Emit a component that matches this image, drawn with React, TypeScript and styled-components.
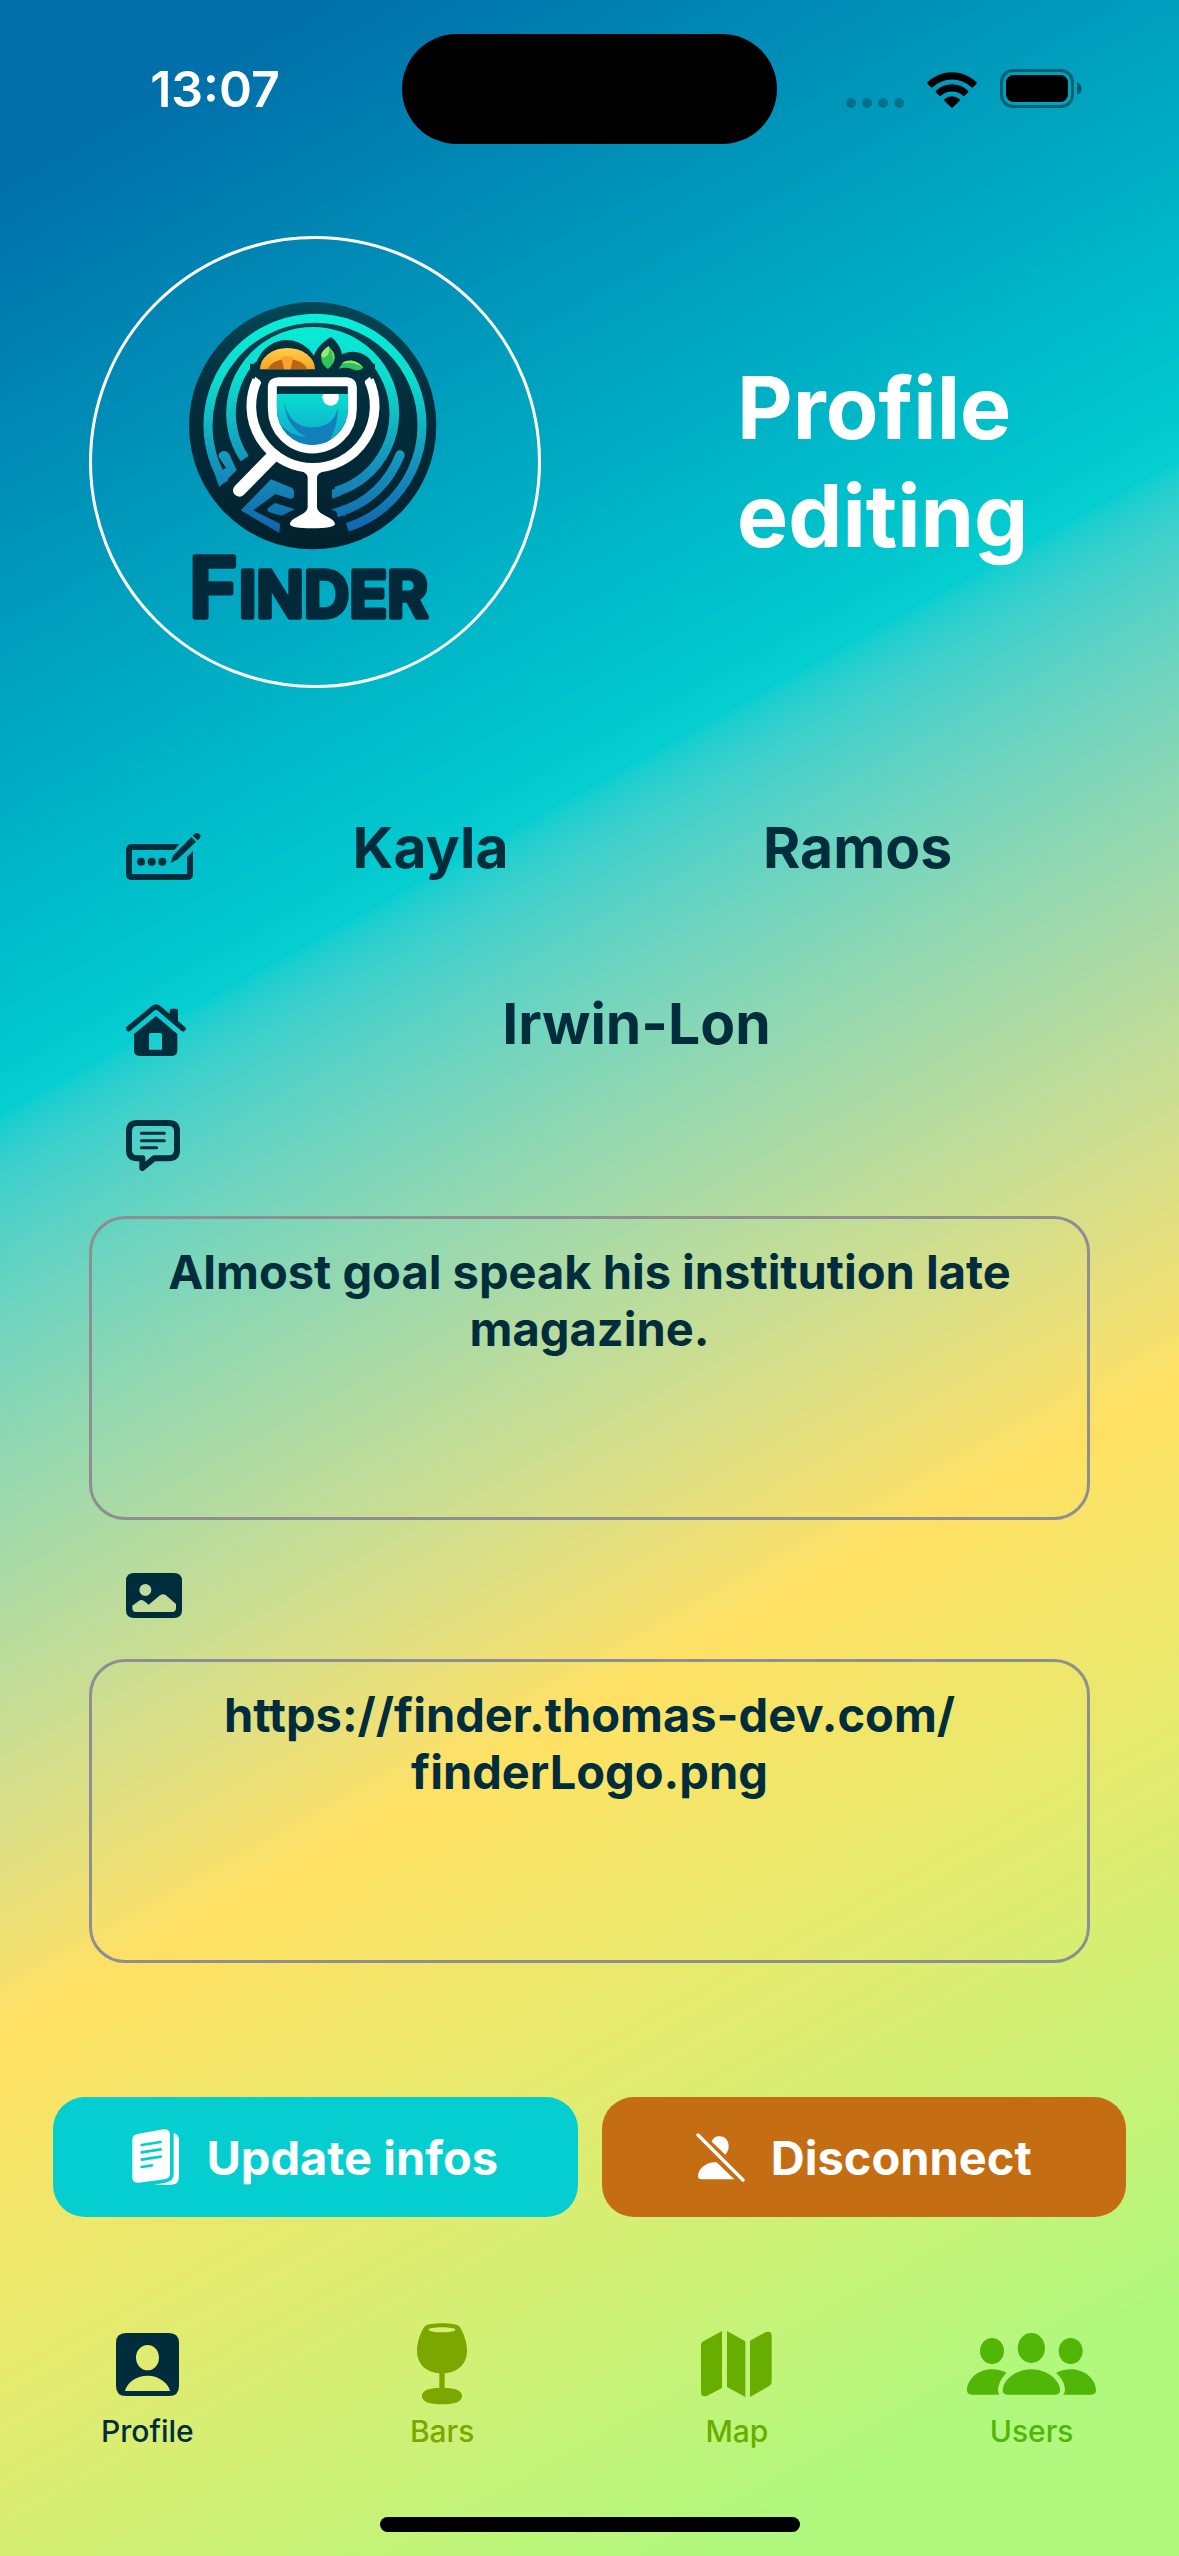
import React, { useState } from "react";
import styled, { createGlobalStyle } from "styled-components";

const ink = "#002d3b";

const GlobalStyle = createGlobalStyle`
  *, *::before, *::after { box-sizing: border-box; }
  body { margin: 0; }
  body, input, textarea, button {
    font-family: Inter, "Liberation Sans", sans-serif;
  }
`;

const Screen = styled.div`
  min-height: 100vh;
  display: flex;
  flex-direction: column;
  color: ${ink};
  background: linear-gradient(
    151deg in oklab,
    #016fa9 5.6%,
    #05ced1 34.7%,
    #ffe164 63.4%,
    #b0f87e 92.2%
  );
`;

const StatusBar = styled.div`
  height: 177px;
  padding: 0 28px;
  display: grid;
  grid-template-columns: 1fr 375px 1fr;
  align-items: center;
  justify-items: center;
`;

const Clock = styled.time`
  color: #fff;
  font-size: 50px;
  font-weight: 600;
  line-height: 60px;
`;

const Island = styled.div`
  width: 100%;
  height: 110px;
  border-radius: 55px;
  background: #000;
`;

const StatusIcons = styled.div`
  display: flex;
  align-items: flex-end;
  gap: 23px;
  svg { display: block; }
`;

const Header = styled.header`
  display: flex;
  align-items: center;
  margin-top: 59px;
  padding: 0 89px;
`;

const Avatar = styled.div`
  flex: none;
  width: 452px;
  height: 452px;
  display: flex;
  align-items: center;
  justify-content: center;
  border: 3px solid #fff;
  border-radius: 50%;
`;

const Title = styled.h1`
  flex: 1;
  margin: 0;
  padding-left: 196px;
  color: #fff;
  font-size: 86px;
  font-weight: 700;
  line-height: 108px;
`;

const Form = styled.form`
  display: flex;
  flex-direction: column;
  padding: 126px 89px 0;
`;

const Row = styled.div`
  display: flex;
  align-items: flex-end;
  gap: 20px;
  padding: 0 23px 0 37px;
  & + & { margin-top: 110px; }
`;

const IconLabel = styled.label`
  flex: none;
  display: block;
  svg { display: block; }
`;

const AreaLabel = styled(IconLabel)<{ $top: number; $bottom: number }>`
  margin-top: ${(p) => p.$top}px;
  margin-bottom: ${(p) => p.$bottom}px;
  padding-left: 37px;
`;

const Fields = styled.div`
  flex: 1;
  min-width: 0;
  display: flex;
  gap: 8px;
`;

const TextField = styled.input`
  flex: 1;
  width: 0;
  min-width: 0;
  height: 66px;
  padding: 0;
  border: 0;
  outline: 0;
  background: transparent;
  color: ${ink};
  font-size: 57px;
  font-weight: 700;
  text-align: center;
`;

const TextArea = styled.textarea`
  display: block;
  width: 100%;
  height: 304px;
  margin: 0;
  padding: 24px 40px;
  border: 3px solid #8e8e93;
  border-radius: 36px;
  outline: 0;
  resize: none;
  overflow: hidden;
  background: transparent;
  color: ${ink};
  font-size: 47px;
  font-weight: 700;
  line-height: 57px;
  text-align: center;
`;

const Actions = styled.div`
  display: flex;
  gap: 24px;
  margin-top: 134px;
  padding: 0 53px;
`;

const ActionButton = styled.button<{ $color: string }>`
  flex: 1;
  height: 120px;
  display: flex;
  align-items: center;
  justify-content: center;
  gap: 26px;
  padding: 0;
  border: 0;
  border-radius: 32px;
  background: ${(p) => p.$color};
  color: #fff;
  font-size: 47px;
  font-weight: 700;
  cursor: pointer;
`;

const TabBar = styled.nav`
  display: flex;
  margin-top: 106px;
`;

const Tab = styled.a<{ $color: string }>`
  flex: 1;
  display: flex;
  flex-direction: column;
  align-items: center;
  gap: 8px;
  color: ${(p) => p.$color};
  font-size: 30px;
  font-weight: 500;
  line-height: 36px;
  text-decoration: none;
`;

const TabIcon = styled.span`
  height: 82px;
  display: flex;
  align-items: center;
`;

const HomeIndicator = styled.div`
  width: 420px;
  height: 15px;
  margin: 68px auto 24px;
  border-radius: 8px;
  background: #000;
`;

const SignalDots = () => (
  <svg width="58" height="10" viewBox="0 0 58 10" opacity="0.25">
    <circle cx="5" cy="5" r="5" />
    <circle cx="21" cy="5" r="5" />
    <circle cx="37" cy="5" r="5" />
    <circle cx="53" cy="5" r="5" />
  </svg>
);

const Wifi = () => (
  <svg width="50" height="37" viewBox="0 0 50 37">
    <path d="M.8 13.2Q-.3 12 .9 10.8A35 35 0 0 1 49.1 10.8Q50.3 12 49.2 13.2L45.6 16.4Q45 16.8 44.3 16.2A28 28 0 0 0 5.7 16.2Q5 16.8 4.4 16.4Z" />
    <path d="M9 21.5Q8 20.4 9.1 19.4A23.5 23.5 0 0 1 40.9 19.4Q42 20.4 41 21.5L37.3 25Q36.7 25.4 36 24.8A16.5 16.5 0 0 0 14 24.8Q13.3 25.4 12.7 25Z" />
    <path d="M17.6 30Q16.5 29 17.6 28A11 11 0 0 1 32.4 28Q33.5 29 32.4 30L26 36.3Q25 37.3 24 36.3Z" />
  </svg>
);

const Battery = () => (
  <svg width="82" height="39" viewBox="0 0 82 39">
    <rect x="1.5" y="1.5" width="71" height="36" rx="11.5" fill="none" stroke="#000" strokeWidth="3" opacity="0.4" />
    <rect x="6" y="6" width="62" height="27" rx="7.5" />
    <path d="M77 13q4.500 2 4.500 6.500T77 26z" opacity="0.45" />
  </svg>
);

const FinderLogo = () => (
  <svg width="290" height="360" viewBox="0 5 870 1080" role="img" aria-label="Finder logo">
    <defs>
      <linearGradient id="ring" gradientUnits="userSpaceOnUse" x1="0" y1="96" x2="0" y2="760">
        <stop offset="0" stopColor="#08efda" />
        <stop offset="0.3" stopColor="#0cdccd" />
        <stop offset="0.65" stopColor="#1599bd" />
        <stop offset="1" stopColor="#1263ac" />
      </linearGradient>
      <linearGradient id="disc" x1="0" y1="0" x2="0" y2="1">
        <stop offset="0" stopColor="#034857" />
        <stop offset="0.35" stopColor="#022f3e" />
        <stop offset="1" stopColor="#02202c" />
      </linearGradient>
      <linearGradient id="drink" x1="0" y1="0" x2="0" y2="1">
        <stop offset="0" stopColor="#08dfd0" />
        <stop offset="1" stopColor="#12a3cb" />
      </linearGradient>
      <linearGradient id="orange" x1="0" y1="0" x2="0" y2="1">
        <stop offset="0" stopColor="#ffcf4d" />
        <stop offset="1" stopColor="#f9a31f" />
      </linearGradient>
      <clipPath id="liquidClip">
        <path d="M320 340H534V385A107 109 0 0 1 320 385Z" />
      </clipPath>
    </defs>
    <circle cx="428" cy="436" r="371" fill="url(#disc)" />
    <path d="M164 607A321 321 0 1 1 532 741" fill="none" stroke="url(#ring)" strokeWidth="27" />
    <path d="M140 600L148 620L200 570L178 522Q168 507 153 514Q142 522 148 532L168 562L136 583Z" fill="url(#ring)" />
    <path d="M248 243A241 241 0 0 1 608 243Z" fill="url(#ring)" />
    <path d="M224 535A245 245 0 1 1 498 634" fill="none" stroke="url(#ring)" strokeWidth="29" />
    <path d="M486 628V655L512 646L512 618Z" fill="url(#ring)" />
    <path d="M690 524C660 600 600 670 500 697" fill="none" stroke="url(#ring)" strokeWidth="28" />
    <circle cx="690" cy="524" r="14" fill="url(#ring)" />
    <path d="M483 686L525 708L530 680Z" fill="url(#ring)" />
    <path d="M303 597L365 622Q372 626 372 634V646Q372 656 360 655L316 641L250 690L330 730L328 758L212 690Z" fill="url(#ring)" />
    <path d="M315 668L374 687L335 706L298 696Q289 690 295 682Z" fill="url(#ring)" />
    <g fill="#02303e">
      <circle cx="350" cy="273" r="94" />
      <path d="M425 260C425 215 455 185 483 170C510 190 522 220 518 262Z" />
      <circle cx="548" cy="284" r="70" />
      <path d="M240 250H615V330H240Z" />
    </g>
    <path d="M270 267A82 64 0 0 1 435 267Z" fill="url(#orange)" />
    <path d="M294 267A60 40 0 0 1 411 267Z" fill="#bd6413" />
    <path d="M333 230L343 267H362L370 230Q352 225 333 230Z" fill="#f7a52a" />
    <path d="M474 266C445 245 448 215 476 197C497 220 500 245 474 266Z" fill="#2ec35c" />
    <path d="M476 197C450 215 448 230 462 232C475 225 482 215 476 197Z" fill="#9be96b" />
    <path d="M480 205C492 225 492 240 485 252C500 235 495 215 480 205Z" fill="#86e060" />
    <path d="M507 265C520 235 560 235 580 262Q568 274 552 268Q530 258 507 265Z" fill="#2ec35c" />
    <path d="M514 250C530 236 560 235 580 262Q550 240 514 250Z" fill="#9be96b" />
    <path d="M208 630L306 530" stroke="#fff" strokeWidth="38" strokeLinecap="round" />
    <path d="M261 300A185 185 0 1 0 597 300" fill="none" stroke="#fff" strokeWidth="29" />
    <path d="M249 306L256 289L272 302L264 320Z" fill="#fff" />
    <path d="M607 306L600 289L584 302L592 320Z" fill="#fff" />
    <path d="M325 304H530Q547 304 547 321V385A120 121 0 0 1 307 385V321Q307 304 325 304Z" fill="#02303e" stroke="#fff" strokeWidth="27" />
    <g clipPath="url(#liquidClip)">
      <rect x="320" y="340" width="214" height="155" fill="url(#drink)" />
      <path d="M342 358C350 420 390 441 428 441C465 441 495 425 503 384C506 430 485 465 470 500H370L330 430Q355 465 410 470Q345 440 342 358Z" fill="#1280bb" />
      <circle cx="482" cy="351" r="25" fill="#fff" />
    </g>
    <path d="M395 572H461Q441 580 441 592V680C441 705 495 710 495 732Q490 744 428 744Q362 744 360 732C360 710 413 705 413 680V592Q413 580 395 572Z" fill="#fff" />
    <g fill="#02293a" stroke="#02293a" strokeWidth="16" strokeLinejoin="round" fontFamily="Inter, sans-serif" fontWeight="600">
      <text x="58" y="1010" fontSize="246">F</text>
      <text x="207" y="1010" fontSize="188">INDER</text>
    </g>
  </svg>
);

const NameIcon = () => (
  <svg width="75" height="47" viewBox="0 0 225 141">
    <path d="M160 33L145 51H18V123H183V72L201 54V122Q201 141 182 141H19Q0 141 0 122V52Q0 33 19 33Z" fill={ink} />
    <circle cx="45" cy="86" r="12" fill={ink} />
    <circle cx="77" cy="86" r="12" fill={ink} />
    <circle cx="109" cy="86" r="12" fill={ink} />
    <path d="M134 90L141 68L196 12L210 26L155 79Z" fill={ink} />
    <path d="M200 8Q211-5 220 3Q229 13 215 22Z" fill={ink} />
  </svg>
);

const HouseIcon = () => (
  <svg width="60" height="52" viewBox="0 0 180 156">
    <path d="M8 74L82 12Q90 6 98 12L171 74" fill="none" stroke={ink} strokeWidth="16" strokeLinecap="round" />
    <path d="M131 36V20Q131 14 137 14H150Q156 14 156 20V58Z" fill={ink} />
    <path fillRule="evenodd" d="M90 36L154 90V139Q154 156 138 156H41Q24 156 24 139V90ZM74 87Q69 87 69 92V137H108V92Q108 87 103 87Z" fill={ink} />
  </svg>
);

const CommentIcon = () => (
  <svg width="54" height="51" viewBox="0 0 162 153">
    <path d="M34 9H128Q153 9 153 34V91Q153 115 128 115H84L49 144V115H34Q9 115 9 91V34Q9 9 34 9Z" fill="none" stroke={ink} strokeWidth="18" strokeLinejoin="round" />
    <path d="M46 40H115M46 62H115M46 83H92" stroke={ink} strokeWidth="9" strokeLinecap="round" />
  </svg>
);

const PhotoIcon = () => (
  <svg width="56" height="45" viewBox="0 0 168 135">
    <path fillRule="evenodd" d="M24 0H144Q168 0 168 24V111Q168 135 144 135H24Q0 135 0 111V24Q0 0 24 0ZM58 33A18 18 0 1 0 58 69A18 18 0 1 0 58 33ZM19 98V106Q19 117 30 117H138Q150 117 150 106V93L120 67Q111 60 102 67L68 95L54 84Q46 78 38 84Z" fill={ink} />
  </svg>
);

const DocumentsIcon = () => (
  <svg width="48" height="56" viewBox="0 0 144 168">
    <path d="M16 15L94 1Q114-1 114 18V133Q114 148 98 151L20 161Q2 162 1 146V33Q1 18 16 15Z" fill="#fff" />
    <path d="M125 12Q141 16 141 34V143Q141 167 117 167H66L100 161Q125 156 125 136Z" fill="#fff" />
    <path d="M29 48L86 39M29 70L86 61M29 92L86 83M29 114L60 109" stroke="#05ced1" strokeWidth="8" strokeLinecap="round" />
  </svg>
);

const PersonOffIcon = () => (
  <svg width="49" height="49" viewBox="0 0 147 147">
    <path d="M47 26C52 2 98 2 98 40Q98 54 88 65ZM62 88L115 139H16Q6 139 6 130C6 106 32 86 62 88Z" fill="#fff" />
    <path d="M6 6L141 141" stroke="#fff" strokeWidth="10" strokeLinecap="round" />
  </svg>
);

const ProfileIcon = () => (
  <svg width="63" height="63" viewBox="0 0 189 189">
    <path fillRule="evenodd" fill="currentColor" d="M30 0H159Q189 0 189 30V159Q189 189 159 189H30Q0 189 0 159V30Q0 0 30 0ZM95 36C75 36 60 53 60 74C60 95 76 112 95 112C114 112 129 95 129 74C129 53 115 36 95 36ZM27 174H162C158 152 130 128 95 128C59 128 32 151 27 174Z" />
  </svg>
);

const GlassIcon = () => (
  <svg width="50" height="82" viewBox="0 0 150 246">
    <path fillRule="evenodd" fill="currentColor" d="M75 1C100 1 122 3 129 13C141 32 150 60 150 84C150 123 122 148 83 151V195C112 195 135 202 135 219C135 237 112 244 75 244S15 237 15 219C15 202 38 195 67 195V151C28 148 0 123 0 84C0 60 9 32 21 13C28 3 50 1 75 1ZM75 13C52 13 35 16 35 20S52 28 75 28S115 24 115 20S98 13 75 13Z" />
  </svg>
);

const MapIcon = () => (
  <svg width="71" height="66" viewBox="0 0 213 198">
    <g fill="currentColor">
      <path d="M63 0V171L17 195Q0 199 0 184V41Q0 34 7 31Z" />
      <path d="M78 0L133 31V198L78 168Z" />
      <path d="M147 29L193 4Q212-2 212 14V153Q212 160 206 164L147 198Z" />
    </g>
  </svg>
);

const UsersIcon = () => (
  <svg width="129" height="62" viewBox="0 0 387 186">
    <g fill="currentColor">
      <ellipse cx="75" cy="54" rx="36" ry="39" />
      <ellipse cx="193" cy="45" rx="41" ry="45" />
      <ellipse cx="311" cy="54" rx="36" ry="39" />
      <path d="M119 120C103 134 93 155 93 172Q94 180 97 185H14Q0 185 0 172C0 140 32 109 75 109Q101 109 119 120Z" />
      <path d="M267 120C285 134 294 155 294 172Q293 180 289 185H373Q387 185 387 172C387 140 354 109 311 109Q287 109 267 120Z" />
      <path d="M193 109C240 109 279 142 279 172Q279 185 265 185H121Q107 185 107 172C107 142 146 109 193 109Z" />
    </g>
  </svg>
);

const tabs = [
  { id: "profile", label: "Profile", color: ink, icon: <ProfileIcon /> },
  { id: "bars", label: "Bars", color: "#7ba700", icon: <GlassIcon /> },
  { id: "map", label: "Map", color: "#68ae00", icon: <MapIcon /> },
  { id: "users", label: "Users", color: "#52b608", icon: <UsersIcon /> },
];

export default function App() {
  const [profile, setProfile] = useState({
    firstName: "Kayla",
    lastName: "Ramos",
    city: "Irwin-Lon",
    description: "Almost goal speak his institution late magazine.",
    // The zero-width space lets a long address wrap after its host name.
    picture: "https://finder.thomas-dev.com/\u200bfinderLogo.png",
  });

  const bind = (key: keyof typeof profile) => ({
    id: key,
    value: profile[key],
    onChange: (e: React.ChangeEvent<HTMLInputElement | HTMLTextAreaElement>) =>
      setProfile({ ...profile, [key]: e.target.value }),
  });

  return (
    <>
      <GlobalStyle />
      <Screen>
        <StatusBar>
          <Clock>13:07</Clock>
          <Island />
          <StatusIcons>
            <SignalDots />
            <Wifi />
            <Battery />
          </StatusIcons>
        </StatusBar>
        <main>
          <Header>
            <Avatar>
              <FinderLogo />
            </Avatar>
            <Title>Profile editing</Title>
          </Header>
          <Form id="profile-form" onSubmit={(e) => e.preventDefault()}>
            <Row>
              <IconLabel htmlFor="firstName" aria-label="First name">
                <NameIcon />
              </IconLabel>
              <Fields>
                <TextField {...bind("firstName")} />
                <TextField {...bind("lastName")} aria-label="Last name" />
              </Fields>
            </Row>
            <Row>
              <IconLabel htmlFor="city" aria-label="City">
                <HouseIcon />
              </IconLabel>
              <Fields>
                <TextField {...bind("city")} />
              </Fields>
            </Row>
            <AreaLabel htmlFor="description" aria-label="Description" $top={64} $bottom={45}>
              <CommentIcon />
            </AreaLabel>
            <TextArea {...bind("description")} spellCheck={false} />
            <AreaLabel htmlFor="picture" aria-label="Picture address" $top={53} $bottom={41}>
              <PhotoIcon />
            </AreaLabel>
            <TextArea {...bind("picture")} spellCheck={false} />
          </Form>
          <Actions>
            <ActionButton type="submit" form="profile-form" $color="#05ced1">
              <DocumentsIcon />
              Update infos
            </ActionButton>
            <ActionButton type="button" $color="#c46d12">
              <PersonOffIcon />
              Disconnect
            </ActionButton>
          </Actions>
        </main>
        <TabBar>
          {tabs.map((tab) => (
            <Tab key={tab.id} href={`#${tab.id}`} $color={tab.color}>
              <TabIcon>{tab.icon}</TabIcon>
              {tab.label}
            </Tab>
          ))}
        </TabBar>
        <HomeIndicator />
      </Screen>
    </>
  );
}
